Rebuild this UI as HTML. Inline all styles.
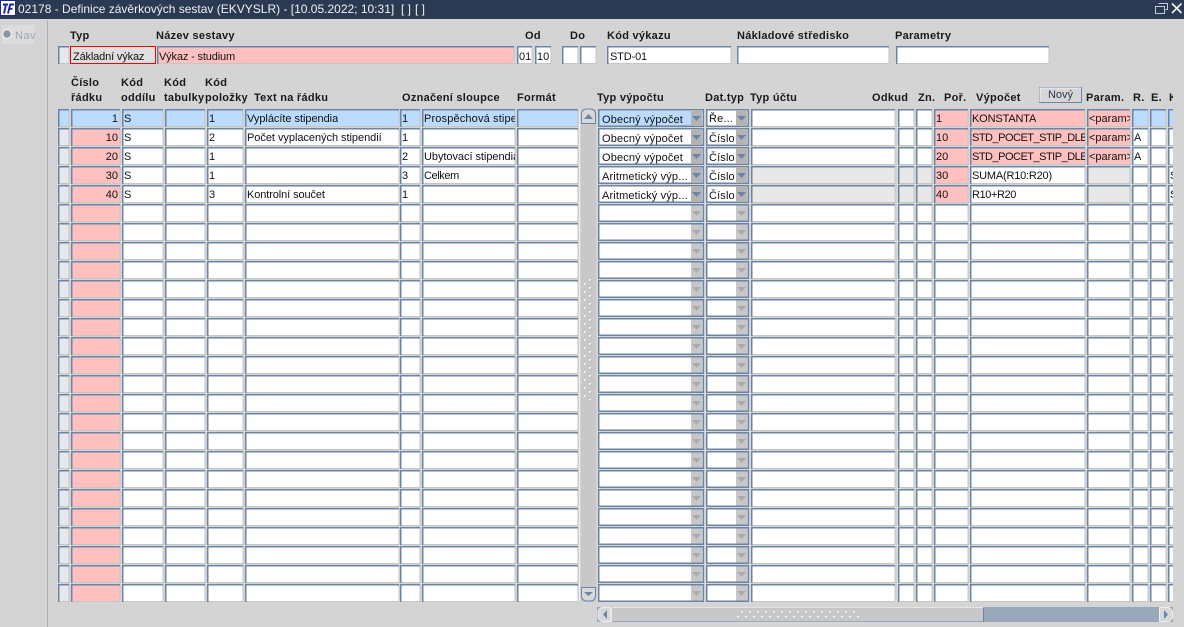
<!DOCTYPE html>
<html><head><meta charset="utf-8"><title>02178</title>
<style>
html,body{margin:0;padding:0;width:1184px;height:627px;overflow:hidden;background:#d4d4d4}
body{position:relative;font:11px/18px "Liberation Sans",Arial,sans-serif;color:#111}
svg{position:absolute;left:0;top:0}
div{position:absolute;white-space:nowrap;overflow:hidden;height:18px;margin-top:1px}
.l{font-weight:bold;color:#1a1a1a;letter-spacing:.27px;height:16px;line-height:16px}
.r{text-align:right}
.x{letter-spacing:-.15px}
.w{letter-spacing:-.04px}
.y{letter-spacing:.15px}
</style></head><body>
<svg width="1184" height="627" viewBox="0 0 1184 627">
<defs><g id="r">
<path fill="#e8e8ec" d="M58 0H69V18H58z"/>
<path fill="#ffc0c0" d="M71 0H120V18H71z"/>
<path fill="#fff" d="M122 0H163V18H122zM165 0H205V18H165zM207 0H243V18H207zM245 0H399V18H245zM400 0H420V18H400zM422 0H515V18H422zM517 0H578V18H517zM598 0H704V18H598zM706 0H749V18H706zM751 0H895V18H751zM898 0H914V18H898zM916 0H932V18H916zM934 0H968V18H934zM970 0H1085V18H970zM1087 0H1130V18H1087zM1132 0H1148V18H1132zM1150 0H1166V18H1150zM1168 0H1173V18H1168z"/>
<path fill="#c8c8c8" d="M691 1H702V17H691zM736 1H747V17H736z"/>
<path fill="#aaa" d="M692 7h9l-4.500 5zM737 7h9l-4.500 5z"/>
<path fill="none" stroke="#c6c6c6" d="M69 .5V17.5H58M120 .5V17.5H71M163 .5V17.5H122M205 .5V17.5H165M243 .5V17.5H207M399 .5V17.5H245M420 .5V17.5H400M515 .5V17.5H422M578 .5V17.5H517M895 .5V17.5H751M914 .5V17.5H898M932 .5V17.5H916M968 .5V17.5H934M1085 .5V17.5H970M1130 .5V17.5H1087M1148 .5V17.5H1132M1166 .5V17.5H1150M1173 17.5H1168"/>
<path fill="none" stroke="#6c84a6" stroke-width="1.5" d="M58.75 18V.75H69M71.75 18V.75H120M122.75 18V.75H163M165.75 18V.75H205M207.75 18V.75H243M245.75 18V.75H399M400.75 18V.75H420M422.75 18V.75H515M517.75 18V.75H578M751.75 18V.75H895M898.75 18V.75H914M916.75 18V.75H932M934.75 18V.75H968M970.75 18V.75H1085M1087.75 18V.75H1130M1132.75 18V.75H1148M1150.75 18V.75H1166M1168.75 18V.75H1173"/>
<path fill="none" stroke="#6c84a6" stroke-width="1.5" d="M598.75 .75H703.25V17.25H598.75zM706.75 .75H748.25V17.25H706.75z"/>
</g></defs>
<!-- title bar -->
<rect width="1184" height="19" fill="#2a3a52"/>
<rect x=".5" y=".5" width="15" height="15" fill="#fff" stroke="#1c2a90"/>
<path fill="none" stroke="#1a22b0" stroke-width="1.900" d="M3 4.500H8M5.800 5L4 13.500M10.300 4L8 13.500M9.500 4.500H14M9 8.800H12.500"/>
<path fill="none" stroke="#c4ccd6" stroke-width="1" d="M1158.5 3.500h9v6h-2M1155.500 6.500h9v7h-9z"/>
<path fill="none" stroke="#f2f2f2" stroke-width="1.600" d="M1172 3.500L1181.500 13M1181.500 3.500L1172 13"/>
<!-- left panel -->
<rect x="2" y="25" width="32" height="19" fill="#dcdcdc"/>
<rect x="47" y="20" width="1" height="607" fill="#a9b3c0"/>
<circle cx="7" cy="34" r="4.200" fill="#8a94a4" stroke="#f4f4f4" stroke-width="1"/>
<!-- top fields -->
<g id="top">
<path fill="#e8e8ec" d="M58 46H69V64H58z"/>
<path fill="#e0e0e0" d="M70 46H156V64H70z"/>
<path fill="#ffc0c0" d="M157 46H514V64H157z"/>
<path fill="#fff" d="M517 46H532V64H517zM535 46H551V64H535zM562 46H578V64H562zM580 46H596V64H580zM607 46H731V64H607zM737 46H889V64H737zM896 46H1049V64H896z"/>
<path fill="none" stroke="#c6c6c6" d="M69 46.500V63.500H58M514 46.500V63.500H157M532 46.500V63.500H517M551 46.500V63.500H535M578 46.500V63.500H562M596 46.500V63.500H580M731 46.500V63.500H607M889 46.500V63.500H737M1049 46.500V63.500H896"/>
<path fill="none" stroke="#6c84a6" stroke-width="1.500" d="M58.750 64V46.750H69M157.750 64V46.750H514M517.750 64V46.750H532M535.750 64V46.750H551M562.750 64V46.750H578M580.750 64V46.750H596M607.750 64V46.750H731M737.750 64V46.750H889M896.750 64V46.750H1049"/>
<rect x="70.500" y="46.500" width="85" height="17" fill="none" stroke="#f00000" stroke-width="1"/>
</g>
<!-- Novy -->
<rect x="1039.500" y="87.500" width="42" height="15" fill="#d6d6d6" stroke="#6c84a6"/>
<path fill="none" stroke="#f4f4f4" d="M1040 102V88H1081"/>
<!-- grid rows -->
<use href="#r" y="109"/><use href="#r" y="128"/><use href="#r" y="147"/><use href="#r" y="166"/><use href="#r" y="185"/><use href="#r" y="204"/><use href="#r" y="223"/><use href="#r" y="242"/><use href="#r" y="261"/><use href="#r" y="280"/><use href="#r" y="299"/><use href="#r" y="318"/><use href="#r" y="337"/><use href="#r" y="356"/><use href="#r" y="375"/><use href="#r" y="394"/><use href="#r" y="413"/><use href="#r" y="432"/><use href="#r" y="451"/><use href="#r" y="470"/><use href="#r" y="489"/><use href="#r" y="508"/><use href="#r" y="527"/><use href="#r" y="546"/><use href="#r" y="565"/><use href="#r" y="584"/>
<!-- row 1 blue -->
<path fill="#bcdcff" d="M59.500 110.500H68.500V126H59.500zM72.500 110.500H119.500V126H72.500zM123.500 110.500H162.500V126H123.500zM166.500 110.500H204.500V126H166.500zM208.500 110.500H242.500V126H208.500zM246.500 110.500H398.500V126H246.500zM401.500 110.500H419.500V126H401.500zM423.500 110.500H514.500V126H423.500zM518.500 110.500H577.500V126H518.500zM599.500 110.500H691V125.500H599.500zM1133.500 110.500H1147.500V126H1133.500zM1151.500 110.500H1165.500V126H1151.500zM1169.500 110.500H1173V126H1169.500z"/>
<!-- pink cells -->
<path fill="#ffc0c0" d="M935.500 110.500H967.500V126H935.500zM935.500 129.500H967.500V145H935.500zM935.500 148.500H967.500V164H935.500zM935.500 167.500H967.500V183H935.500zM935.500 186.500H967.500V202H935.500zM971.500 110.500H1084.500V126H971.500zM971.500 129.500H1084.500V145H971.500zM971.500 148.500H1084.500V164H971.500zM1088.500 110.500H1129.500V126H1088.500zM1088.500 129.500H1129.500V145H1088.500zM1088.500 148.500H1129.500V164H1088.500z"/>
<!-- grey disabled -->
<path fill="#e8e8e8" d="M752.500 167.500H894.500V183H752.500zM752.500 186.500H894.500V202H752.500zM899.500 167.500H913.500V183H899.500zM899.500 186.500H913.500V202H899.500zM917.500 167.500H931.500V183H917.500zM917.500 186.500H931.500V202H917.500zM1088.500 167.500H1129.500V183H1088.500zM1088.500 186.500H1129.500V202H1088.500z"/>
<!-- active combo buttons -->
<path fill="#b4b4b4" d="M691 110H702V126H691zM736 110H747V126H736zM691 129H702V145H691zM736 129H747V145H736zM691 148H702V164H691zM736 148H747V164H736zM691 167H702V183H691zM736 167H747V183H736zM691 186H702V202H691zM736 186H747V202H736z"/>
<path fill="#6c84a6" d="M692 116h9l-4.500 5zM737 116h9l-4.500 5zM692 135h9l-4.500 5zM737 135h9l-4.500 5zM692 154h9l-4.500 5zM737 154h9l-4.500 5zM692 173h9l-4.500 5zM737 173h9l-4.500 5zM692 192h9l-4.500 5zM737 192h9l-4.500 5z"/>
<!-- vertical scrollbar -->
<rect x="579" y="109" width="1" height="493" fill="#eee"/>
<rect x="581" y="109" width="15" height="493" fill="#c8c8c8"/>
<path fill="#d8d8dc" stroke="#6c84a6" d="M581.500 123.500V114a5 5 0 0 1 5-5h4a5 5 0 0 1 5 5v9.500z"/>
<path fill="#6c84a6" d="M584 119l4.500-5 4.500 5z"/>
<path fill="#d8d8dc" stroke="#6c84a6" d="M581.500 587.500V596a5 5 0 0 0 5 5h4a5 5 0 0 0 5-5v-8.500z"/>
<path fill="#6c84a6" d="M584 592l4.500 4 4.500-4z"/>
<line x1="585" x2="585" y1="283" y2="400" stroke="#f4f4f8" stroke-width="2" stroke-dasharray="2 6"/>
<line x1="590" x2="590" y1="279" y2="400" stroke="#f4f4f8" stroke-width="2" stroke-dasharray="2 6"/>
<line x1="586" x2="586" y1="284" y2="400" stroke="#9aa8c4" stroke-width="1" stroke-dasharray="1 7"/>
<line x1="591" x2="591" y1="280" y2="400" stroke="#9aa8c4" stroke-width="1" stroke-dasharray="1 7"/>
<!-- horizontal scrollbar -->
<rect x="597" y="607" width="576" height="15" fill="#98a7b9"/>
<rect x="612" y="608" width="371" height="14" fill="#c8c8c8"/>
<rect x="612" y="607" width="371" height="1" fill="#e4e4e4"/>
<rect x="983" y="608" width="1" height="14" fill="#6c84a6"/>
<rect x="612" y="621" width="371" height="1" fill="#98a7b9"/>
<rect x="611" y="608" width="1" height="14" fill="#eee"/>
<path fill="#d8d8dc" stroke="#eee" d="M611 607.500h-8a5 5 0 0 0-5 5v4a5 5 0 0 0 5 5h8z"/>
<path fill="#6c84a6" d="M607 610v9l-4-4.500z"/>
<path fill="#d8d8dc" stroke="#eee" d="M1159.500 607.500h8a5 5 0 0 1 5 5v4a5 5 0 0 1-5 5h-8z"/>
<path fill="#6c84a6" d="M1164 610v9l4-4.500z"/>
<line x1="741" x2="858" y1="612" y2="612" stroke="#f4f4f8" stroke-width="2" stroke-dasharray="2 6"/>
<line x1="737" x2="860" y1="617" y2="617" stroke="#f4f4f8" stroke-width="2" stroke-dasharray="2 6"/>
<line x1="742" x2="858" y1="613" y2="613" stroke="#9aa8c4" stroke-width="1" stroke-dasharray="1 7"/>
<line x1="738" x2="860" y1="618" y2="618" stroke="#9aa8c4" stroke-width="1" stroke-dasharray="1 7"/>
</svg>

<div style="left:18px;top:0;height:18px;line-height:17px;font-size:12px;color:#f0f0f0">02178 - Definice závěrkových sestav (EKVYSLR) - [10.05.2022; 10:31]</div>
<div style="left:401px;top:0;height:18px;line-height:17px;font-size:12px;color:#f0f0f0">[ ]</div>
<div style="left:415px;top:0;height:18px;line-height:17px;font-size:12px;color:#f0f0f0">[ ]</div>
<div style="left:15px;top:26px;color:#9aa6b8;letter-spacing:.5px">Nav</div>
<div style="left:1045px;top:87px;width:31px;height:15px;line-height:15px;text-align:center;color:#2a3a52">Nový</div>

<div class="l" style="left:70px;top:27px">Typ</div>
<div class="l" style="left:156px;top:27px">Název sestavy</div>
<div class="l" style="left:525px;top:27px">Od</div>
<div class="l" style="left:570px;top:27px">Do</div>
<div class="l" style="left:607px;top:27px">Kód výkazu</div>
<div class="l" style="left:737px;top:27px">Nákladové středisko</div>
<div class="l" style="left:895px;top:27px">Parametry</div>

<div class="x" style="left:73px;top:47px">Základní výkaz</div>
<div class="x" style="left:159px;top:47px">Výkaz - studium</div>
<div style="left:519px;top:47px">01</div>
<div style="left:537px;top:47px">10</div>
<div class="x" style="left:610px;top:47px">STD-01</div>

<div class="l" style="left:71px;top:74px">Číslo</div>
<div class="l" style="left:71px;top:89px">řádku</div>
<div class="l" style="left:121px;top:74px">Kód</div>
<div class="l" style="left:121px;top:89px">oddílu</div>
<div class="l" style="left:164px;top:74px">Kód</div>
<div class="l" style="left:164px;top:89px">tabulky</div>
<div class="l" style="left:205px;top:74px">Kód</div>
<div class="l" style="left:205px;top:89px">položky</div>
<div class="l" style="left:254px;top:89px">Text na řádku</div>
<div class="l" style="left:402px;top:89px">Označení sloupce</div>
<div class="l" style="left:517px;top:89px">Formát</div>
<div class="l" style="left:597px;top:89px">Typ výpočtu</div>
<div class="l" style="left:705px;top:89px">Dat.typ</div>
<div class="l" style="left:750px;top:89px">Typ účtu</div>
<div class="l" style="left:872px;top:89px">Odkud</div>
<div class="l" style="left:918px;top:89px">Zn.</div>
<div class="l" style="left:944px;top:89px">Poř.</div>
<div class="l" style="left:976px;top:89px">Výpočet</div>
<div class="l" style="left:1086px;top:89px">Param.</div>
<div class="l" style="left:1133px;top:89px">R.</div>
<div class="l" style="left:1151px;top:89px">E.</div>
<div class="l" style="left:1169px;top:89px;width:4px">K</div>

<!-- row 1 -->
<div class="r" style="left:72px;width:46px;top:109px">1</div>
<div style="left:124px;top:109px">S</div>
<div style="left:209px;top:109px">1</div>
<div class="w" style="left:247px;top:109px">Vyplácíte stipendia</div>
<div style="left:402px;top:109px">1</div>
<div class="y" style="left:424px;top:109px;width:91px">Prospěchová stipendia</div>
<div class="y" style="left:602px;top:110px;width:88px">Obecný výpočet</div>
<div class="y" style="left:709px;top:109px;width:27px">Ře...</div>
<div style="left:936px;top:109px">1</div>
<div class="x" style="left:972px;top:109px">KONSTANTA</div>
<div style="left:1089px;top:109px;width:41px">&lt;param&gt;</div>
<!-- row 2 -->
<div class="r" style="left:72px;width:46px;top:128px">10</div>
<div style="left:124px;top:128px">S</div>
<div style="left:209px;top:128px">2</div>
<div class="w" style="left:247px;top:128px">Počet vyplacených stipendií</div>
<div style="left:402px;top:128px">1</div>
<div class="y" style="left:602px;top:129px;width:88px">Obecný výpočet</div>
<div class="y" style="left:709px;top:129px;width:27px">Číslo</div>
<div style="left:936px;top:128px">10</div>
<div style="left:972px;top:128px;width:113px;letter-spacing:-.5px">STD_POCET_STIP_DLE_TYPU</div>
<div style="left:1089px;top:128px;width:41px">&lt;param&gt;</div>
<div style="left:1134px;top:128px">A</div>
<!-- row 3 -->
<div class="r" style="left:72px;width:46px;top:147px">20</div>
<div style="left:124px;top:147px">S</div>
<div style="left:209px;top:147px">1</div>
<div style="left:402px;top:147px">2</div>
<div style="left:424px;top:147px;width:91px;letter-spacing:-.05px">Ubytovací stipendia</div>
<div class="y" style="left:602px;top:148px;width:88px">Obecný výpočet</div>
<div class="y" style="left:709px;top:148px;width:27px">Číslo</div>
<div style="left:936px;top:147px">20</div>
<div style="left:972px;top:147px;width:113px;letter-spacing:-.5px">STD_POCET_STIP_DLE_TYPU</div>
<div style="left:1089px;top:147px;width:41px">&lt;param&gt;</div>
<div style="left:1134px;top:147px">A</div>
<!-- row 4 -->
<div class="r" style="left:72px;width:46px;top:166px">30</div>
<div style="left:124px;top:166px">S</div>
<div style="left:209px;top:166px">1</div>
<div style="left:402px;top:166px">3</div>
<div style="left:424px;top:166px;letter-spacing:-.4px">Celkem</div>
<div class="y" style="left:602px;top:167px;width:88px">Aritmetický výp...</div>
<div class="y" style="left:709px;top:167px;width:27px">Číslo</div>
<div style="left:936px;top:166px">30</div>
<div style="left:972px;top:166px;letter-spacing:-.2px">SUMA(R10:R20)</div>
<div style="left:1170px;top:166px;width:3px">S</div>
<!-- row 5 -->
<div class="r" style="left:72px;width:46px;top:185px">40</div>
<div style="left:124px;top:185px">S</div>
<div style="left:209px;top:185px">3</div>
<div style="left:247px;top:185px;letter-spacing:-.1px">Kontrolní součet</div>
<div style="left:402px;top:185px">1</div>
<div class="y" style="left:602px;top:186px;width:88px">Aritmetický výp...</div>
<div class="y" style="left:709px;top:186px;width:27px">Číslo</div>
<div style="left:936px;top:185px">40</div>
<div style="left:972px;top:185px;letter-spacing:-.4px">R10+R20</div>
<div style="left:1170px;top:185px;width:3px">S</div>
</body></html>
